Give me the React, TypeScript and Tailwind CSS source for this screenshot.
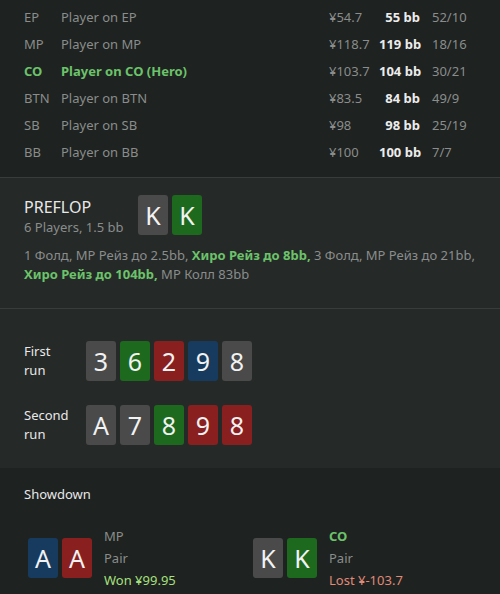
import React from 'react';

type Card = { r: string; c: 'grey' | 'green' | 'red' | 'blue' };

const cardBg: Record<Card['c'], string> = {
  grey: 'bg-[#4a4a4a]',
  green: 'bg-[#1d6a1f]',
  red: 'bg-[#8a1f1f]',
  blue: 'bg-[#173b5f]',
};

function PlayingCard({ card }: { card: Card }) {
  return (
    <div
      className={`flex h-10 w-[30px] items-center justify-center rounded-[3px] text-[25px] leading-none text-[#f2f2f2] ${cardBg[card.c]}`}
    >
      {card.r}
    </div>
  );
}

function Cards({ cards }: { cards: Card[] }) {
  return (
    <div className="flex gap-1">
      {cards.map((c, i) => (
        <PlayingCard key={i} card={c} />
      ))}
    </div>
  );
}

const players = [
  { pos: 'EP', name: 'Player on EP', yen: '¥54.7', bb: '55 bb', stat: '52/10' },
  { pos: 'MP', name: 'Player on MP', yen: '¥118.7', bb: '119 bb', stat: '18/16' },
  { pos: 'CO', name: 'Player on CO (Hero)', yen: '¥103.7', bb: '104 bb', stat: '30/21', hero: true },
  { pos: 'BTN', name: 'Player on BTN', yen: '¥83.5', bb: '84 bb', stat: '49/9' },
  { pos: 'SB', name: 'Player on SB', yen: '¥98', bb: '98 bb', stat: '25/19' },
  { pos: 'BB', name: 'Player on BB', yen: '¥100', bb: '100 bb', stat: '7/7' },
];

export default function App() {
  return (
    <div className="h-[594px] w-[500px] overflow-hidden bg-[#1e2220] text-[13px] font-['Noto_Sans',sans-serif]">
      {/* players */}
      <div className="border-b border-[#393c3b] pt-1 pb-[11px]">
        {players.map((p) => (
          <div key={p.pos} className="flex h-[27px] items-center whitespace-nowrap">
            <div
              className={`w-[37px] pl-6 box-content ${p.hero ? 'font-bold text-[#6cc36a]' : 'text-[#8a8d8c]'}`}
            >
              {p.pos}
            </div>
            <div className={`flex-1 ${p.hero ? 'font-bold text-[#6cc36a]' : 'text-[#8a8d8c]'}`}>{p.name}</div>
            <div className="w-[50px] text-[#8a8d8c]">{p.yen}</div>
            <div className="w-[41px] text-right font-bold text-[#ececec]">{p.bb}</div>
            <div className="w-[80px] pl-3 text-[#8a8d8c]">{p.stat}</div>
          </div>
        ))}
      </div>

      {/* preflop */}
      <div className="border-b border-[#393c3b] bg-[#252928] px-6 pt-[17px] pb-[24px]">
        <div className="flex items-start">
          <div className="w-[114px] pt-[1px]">
            <div className="text-[16px] leading-[22px] text-[#e8e8e8]">PREFLOP</div>
            <div className="leading-[18px] text-[#8a8d8c]">6 Players, 1.5 bb</div>
          </div>
          <Cards
            cards={[
              { r: 'K', c: 'grey' },
              { r: 'K', c: 'green' },
            ]}
          />
        </div>
        <div className="mt-[10px] leading-[19px] text-[#8a8d8c]">
          1 Фолд, MP Рейз до 2.5bb, <span className="font-bold text-[#6cc36a]">Хиро Рейз до 8bb,</span> 3 Фолд, MP
          Рейз до 21bb, <span className="font-bold text-[#6cc36a]">Хиро Рейз до 104bb,</span> MP Колл 83bb
        </div>
      </div>

      {/* runs */}
      <div className="flex flex-col gap-6 bg-[#252928] px-6 pt-8 pb-[23px]">
        {[
          {
            label: ['First', 'run'],
            cards: [
              { r: '3', c: 'grey' },
              { r: '6', c: 'green' },
              { r: '2', c: 'red' },
              { r: '9', c: 'blue' },
              { r: '8', c: 'grey' },
            ] as Card[],
          },
          {
            label: ['Second', 'run'],
            cards: [
              { r: 'A', c: 'grey' },
              { r: '7', c: 'grey' },
              { r: '8', c: 'green' },
              { r: '9', c: 'red' },
              { r: '8', c: 'red' },
            ] as Card[],
          },
        ].map((run) => (
          <div key={run.label[0]} className="flex items-center">
            <div className="w-[62px] leading-[19px] text-[#e8e8e8]">
              {run.label[0]}
              <br />
              {run.label[1]}
            </div>
            <Cards cards={run.cards} />
          </div>
        ))}
      </div>

      {/* showdown */}
      <div className="px-6 pt-[17px]">
        <div className="leading-[18px] text-[#e8e8e8]">Showdown</div>
        <div className="mt-[22px] flex">
          <div className="flex w-[229px] items-center pl-1">
            <Cards
              cards={[
                { r: 'A', c: 'blue' },
                { r: 'A', c: 'red' },
              ]}
            />
            <div className="ml-3 leading-[22px]">
              <div className="text-[#8a8d8c]">MP</div>
              <div className="text-[#8a8d8c]">Pair</div>
              <div className="text-[#a6e07e]">Won ¥99.95</div>
            </div>
          </div>
          <div className="flex items-center">
            <Cards
              cards={[
                { r: 'K', c: 'grey' },
                { r: 'K', c: 'green' },
              ]}
            />
            <div className="ml-3 leading-[22px]">
              <div className="font-bold text-[#6cc36a]">CO</div>
              <div className="text-[#8a8d8c]">Pair</div>
              <div className="text-[#e08a78]">Lost ¥-103.7</div>
            </div>
          </div>
        </div>
      </div>
    </div>
  );
}
